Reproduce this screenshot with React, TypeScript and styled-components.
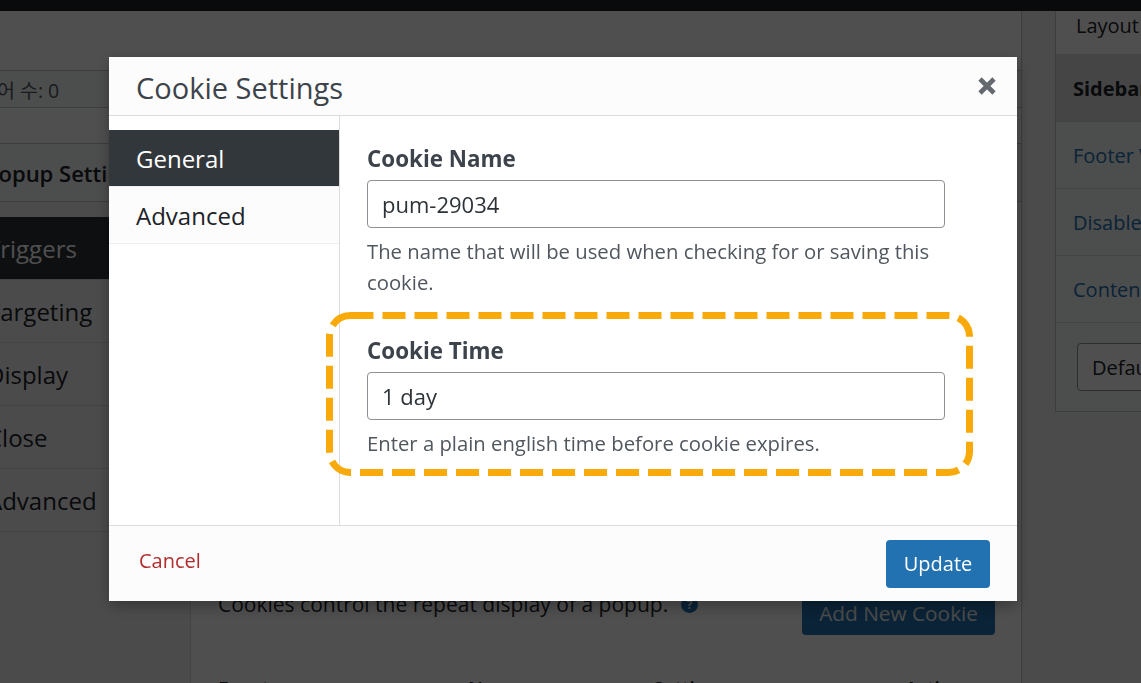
import React from 'react';
import styled, { createGlobalStyle } from 'styled-components';

const GlobalStyle = createGlobalStyle`
  html, body {
    margin: 0;
    padding: 0;
    height: 100%;
    overflow: hidden;
  }
  body {
    font-family: "Open Sans", "Noto Sans", sans-serif;
    background: #f0f0f1;
    color: #1d2327;
  }
  #root {
    height: 100%;
  }
  * {
    box-sizing: border-box;
  }
`;

const popupTabs = ['Triggers', 'Targeting', 'Display', 'Close', 'Advanced'];
const layoutTabs = ['Sidebar Layout', 'Footer Widgets', 'Disable Elements', 'Content Container'];

export default function App() {
  return (
    <>
      <GlobalStyle />
      <AdminBar />
      <Page>
        <MainColumn>
          <WordCount>단어 수: 0</WordCount>

          <Metabox>
            <MetaboxHeader>Popup Settings</MetaboxHeader>
            <MetaboxBody>
              <PopupTabs>
                {popupTabs.map((tab, i) => (
                  <PopupTab key={tab} active={i === 0}>
                    {tab}
                  </PopupTab>
                ))}
              </PopupTabs>

              <PopupPanel>
                <CookieRow>
                  <CookieIntro>
                    Cookies control the repeat display of a popup.
                    <HelpDot>?</HelpDot>
                  </CookieIntro>
                  <PrimaryButton>Add New Cookie</PrimaryButton>
                </CookieRow>
                <TableHead>
                  <span>Event</span>
                  <span>Name</span>
                  <span>Settings</span>
                  <span>Actions</span>
                </TableHead>
              </PopupPanel>
            </MetaboxBody>
          </Metabox>
        </MainColumn>

        <SideColumn>
          <LayoutBox>
            <LayoutTitle>Layout</LayoutTitle>
            {layoutTabs.map((tab, i) => (
              <LayoutTab key={tab} active={i === 0}>
                {tab}
              </LayoutTab>
            ))}
            <LayoutFooter>
              <PlainButton>Default</PlainButton>
            </LayoutFooter>
          </LayoutBox>
        </SideColumn>
      </Page>

      <Overlay />

      <Modal>
        <ModalHeader>
          <ModalTitle>Cookie Settings</ModalTitle>
          <CloseButton aria-label='Close'>
            <svg width='20' height='20' viewBox='0 0 20 20'>
              <path d='M3 3L17 17M17 3L3 17' stroke='#646970' strokeWidth='4.6' />
            </svg>
          </CloseButton>
        </ModalHeader>

        <ModalBody>
          <ModalTabs>
            <ModalTab active>General</ModalTab>
            <ModalTab>Advanced</ModalTab>
          </ModalTabs>

          <ModalContent>
            <Field>
              <Label>Cookie Name</Label>
              <TextInput defaultValue='pum-29034' />
              <Description>
                The name that will be used when checking for or saving this cookie.
              </Description>
            </Field>

            <HighlightField>
              <Label>Cookie Time</Label>
              <TextInput defaultValue='1 day' />
              <Description>Enter a plain english time before cookie expires.</Description>
              <Frame width='647' height='164' viewBox='0 0 647 164'>
                <rect
                  x='3.5'
                  y='3.5'
                  width='640'
                  height='157'
                  rx='21'
                  fill='none'
                  stroke='#f7aa0a'
                  strokeWidth='7'
                  strokeDasharray='23 9'
                />
              </Frame>
            </HighlightField>
          </ModalContent>
        </ModalBody>

        <ModalFooter>
          <CancelLink>Cancel</CancelLink>
          <UpdateButton>Update</UpdateButton>
        </ModalFooter>
      </Modal>
    </>
  );
}

/* page behind the dialog */

const AdminBar = styled.div`
  position: fixed;
  top: 0;
  left: 0;
  right: 0;
  height: 11px;
  background: #1d2327;
  z-index: 5;
`;

const Page = styled.div`
  height: 100vh;
  display: flex;
  padding-top: 11px;
  overflow: hidden;
`;

const MainColumn = styled.div`
  flex: none;
  width: 1050px;
  margin-left: -28px;
  background: #fff;
  border-right: 1px solid #c3c4c7;
  display: flex;
  flex-direction: column;
`;

const WordCount = styled.div`
  flex: none;
  margin-top: 59px;
  height: 38px;
  padding-left: 7px;
  display: flex;
  align-items: center;
  background: #f6f7f7;
  border-top: 1px solid #c3c4c7;
  border-bottom: 1px solid #c3c4c7;
  font-family: "Open Sans", "Noto Sans CJK KR", sans-serif;
  font-size: 19.5px;
  color: #50575e;
`;

const Metabox = styled.div`
  flex: 1;
  min-height: 0;
  margin-top: 35px;
  display: flex;
  flex-direction: column;
`;

const MetaboxHeader = styled.div`
  flex: none;
  height: 59px;
  padding-left: 13px;
  display: flex;
  align-items: center;
  background: #f6f7f7;
  border-top: 1px solid #c3c4c7;
  border-bottom: 1px solid #c3c4c7;
  font-size: 22px;
  font-weight: 600;
`;

const MetaboxBody = styled.div`
  flex: none;
  display: flex;
`;

const PopupTabs = styled.div`
  flex: none;
  width: 219px;
  padding-top: 15px;
  background: #f3f3f4;
  border-right: 1px solid #dcdcde;
`;

const PopupTab = styled.div<{ active?: boolean }>`
  height: 63px;
  padding-left: 15px;
  display: flex;
  align-items: center;
  font-size: 24px;
  white-space: nowrap;
  color: ${(p) => (p.active ? '#fff' : '#1d2327')};
  background: ${(p) => (p.active ? '#2c3338' : 'transparent')};
  border-bottom: 1px solid #dcdcde;
`;

const PopupPanel = styled.div`
  flex: 1;
  padding: 388px 26px 40px 27px;
`;

const CookieRow = styled.div`
  display: flex;
  align-items: flex-start;
  justify-content: space-between;
`;

const CookieIntro = styled.div`
  display: flex;
  align-items: center;
  gap: 13px;
  margin-top: -1px;
  font-size: 21px;
  line-height: 30px;
  color: #1d2327;
`;

const HelpDot = styled.span`
  width: 17px;
  height: 17px;
  border-radius: 50%;
  background: #2271b1;
  color: #fff;
  font-size: 12px;
  font-weight: 700;
  line-height: 17px;
  text-align: center;
`;

const PrimaryButton = styled.button`
  height: 45px;
  padding: 0 17px;
  border: none;
  border-radius: 4px;
  background: #2271b1;
  color: #f0f0f1;
  font-family: inherit;
  font-size: 20.8px;
`;

const TableHead = styled.div`
  margin-top: 40px;
  display: grid;
  grid-template-columns: 250px 185px 252px 1fr;
  font-size: 19px;
  font-weight: 600;
  line-height: 28px;
`;

const SideColumn = styled.div`
  flex: 1;
  min-width: 0;
  padding-left: 33px;
  background: #f0f0f1;
`;

const LayoutBox = styled.div`
  width: 300px;
  margin-top: -20px;
  background: #f6f7f7;
  border: 1px solid #c3c4c7;
`;

const LayoutTitle = styled.div`
  height: 63px;
  padding: 0 0 14px 20px;
  display: flex;
  align-items: flex-end;
  font-size: 20px;
  line-height: 28px;
  background: #fff;
  border-bottom: 1px solid #dcdcde;
`;

const LayoutTab = styled.div<{ active?: boolean }>`
  height: 67px;
  padding-left: 17px;
  display: flex;
  align-items: center;
  font-size: 20px;
  white-space: nowrap;
  font-weight: ${(p) => (p.active ? 700 : 400)};
  color: ${(p) => (p.active ? '#1d2327' : '#2271b1')};
  background: ${(p) => (p.active ? '#dfdfe1' : 'transparent')};
  border-bottom: 1px solid #dcdcde;
`;

const LayoutFooter = styled.div`
  padding: 20px 21px;
`;

const PlainButton = styled.button`
  height: 48px;
  padding: 0 60px 0 14px;
  border: 1px solid #8c8f94;
  border-radius: 4px;
  background: #fff;
  color: #1d2327;
  font-family: inherit;
  font-size: 20px;
`;

/* cookie dialog */

const Overlay = styled.div`
  position: fixed;
  inset: 0;
  background: rgba(0, 0, 0, 0.69);
  z-index: 10;
`;

const Modal = styled.div`
  position: fixed;
  left: 109px;
  top: 57px;
  width: 908px;
  height: 544px;
  z-index: 11;
  display: flex;
  flex-direction: column;
  background: #fff;
  box-shadow: 0 5px 15px rgba(0, 0, 0, 0.3);
`;

const ModalHeader = styled.div`
  flex: none;
  height: 59px;
  padding: 3px 20px 0 27px;
  display: flex;
  align-items: center;
  justify-content: space-between;
  background: #fcfcfc;
  border-bottom: 1px solid #dcdcde;
`;

const ModalTitle = styled.h1`
  margin: 0;
  font-size: 29px;
  font-weight: 400;
  color: #3c434a;
`;

const CloseButton = styled.button`
  width: 20px;
  height: 20px;
  margin-bottom: 3px;
  padding: 0;
  border: none;
  background: none;
  display: flex;
`;

const ModalBody = styled.div`
  flex: 1;
  display: flex;
`;

const ModalTabs = styled.div`
  flex: none;
  width: 231px;
  padding-top: 14px;
  border-right: 1px solid #dcdcde;
`;

const ModalTab = styled.div<{ active?: boolean }>`
  height: 57px;
  padding-left: 27px;
  display: flex;
  align-items: center;
  font-size: 24px;
  color: ${(p) => (p.active ? '#fff' : '#1d2327')};
  background: ${(p) => (p.active ? '#32373c' : '#fcfcfc')};
  border-bottom: 1px solid #f0f0f1;
`;

const ModalContent = styled.div`
  flex: 1;
  padding: 28px 27px;
`;

const Field = styled.div`
  width: 578px;
`;

const HighlightField = styled(Field)`
  position: relative;
  margin-top: 38px;
`;

const Frame = styled.svg`
  position: absolute;
  left: -41px;
  top: -24px;
  pointer-events: none;
`;

const Label = styled.label`
  display: block;
  margin-bottom: 6px;
  font-size: 22.4px;
  font-weight: 700;
  line-height: 30px;
  color: #3c434a;
`;

const TextInput = styled.input`
  display: block;
  width: 100%;
  height: 48px;
  padding: 0 14px;
  border: 1px solid #8c8f94;
  border-radius: 4px;
  font-family: inherit;
  font-size: 22px;
  color: #2c3338;
  background: #fff;
  outline: none;
`;

const Description = styled.p`
  margin: 8px 0 0;
  font-size: 20.3px;
  line-height: 31px;
  color: #50575e;
`;

const ModalFooter = styled.div`
  flex: none;
  height: 76px;
  padding: 0 27px 0 30px;
  display: flex;
  align-items: center;
  justify-content: space-between;
  background: #fcfcfc;
  border-top: 1px solid #dcdcde;
`;

const CancelLink = styled.a`
  margin-bottom: 7px;
  font-size: 20px;
  color: #b32d2e;
  cursor: pointer;
`;

const UpdateButton = styled.button`
  width: 104px;
  height: 48px;
  border: none;
  border-radius: 4px;
  background: #2271b1;
  color: #fff;
  font-family: inherit;
  font-size: 20px;
`;
